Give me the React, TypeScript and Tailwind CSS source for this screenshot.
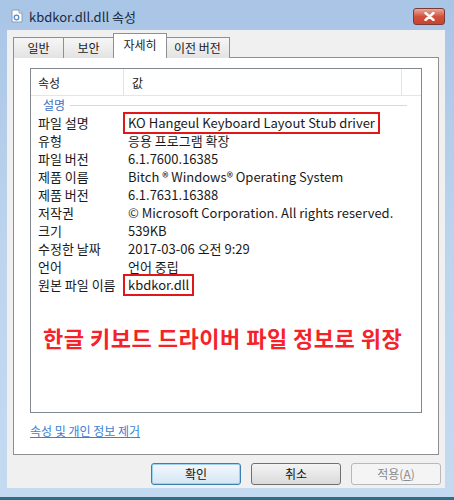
import React from "react";

const F = { fontFamily: '"Noto Sans CJK KR", "Liberation Sans", sans-serif' };

const rows: { k: string; v: string; box?: boolean; gray?: boolean }[] = [
  { k: "파일 설명", v: "KO Hangeul Keyboard Layout Stub driver", box: true },
  { k: "유형", v: "응용 프로그램 확장" },
  { k: "파일 버전", v: "6.1.7600.16385" },
  { k: "제품 이름", v: "Bitch ® Windows® Operating System" },
  { k: "제품 버전", v: "6.1.7631.16388" },
  { k: "저작권", v: "© Microsoft Corporation. All rights reserved." },
  { k: "크기", v: "539KB" },
  { k: "수정한 날짜", v: "2017-03-06 오전 9:29" },
  { k: "언어", v: "언어 중립" },
  { k: "원본 파일 이름", v: "kbdkor.dll", box: true },
];

function Btn({ children, primary, disabled }: { children: React.ReactNode; primary?: boolean; disabled?: boolean }) {
  return (
    <div
      className={
        "w-[90px] h-[22px] rounded-[3px] flex items-center justify-center text-[12px] " +
        (disabled
          ? "border border-[#b5b9bc] bg-[#f4f4f4] text-[#8a8a8a]"
          : primary
          ? "border border-[#3c7fb1] bg-gradient-to-b from-[#f3f8fc] to-[#d4e6f3] text-[#111] shadow-[inset_0_0_0_1px_#9fd2f0]"
          : "border border-[#707070] bg-gradient-to-b from-[#f4f4f4] to-[#dadada] text-[#111]")
      }
      style={F}
    >
      {children}
    </div>
  );
}

export default function App() {
  return (
    <div className="w-[454px] h-[500px] flex flex-col bg-gradient-to-b from-[#a9c5e6] via-[#bcd4ee] to-[#c4daf1] border-b-[3px] border-[#2d6f86]" style={F}>
      {/* title bar */}
      <div className="h-[30px] flex items-start justify-between shrink-0">
        <div className="flex items-center h-[30px] pl-[11px] pt-[2px]">
          <svg width="12" height="14" viewBox="0 0 12 14" className="mr-[6px]">
            <path d="M1 1h7l3 3v9H1z" fill="#fff" stroke="#8a9bb0" strokeWidth="1" />
            <path d="M8 1v3h3" fill="#e8eef5" stroke="#8a9bb0" strokeWidth="1" />
            <circle cx="5.5" cy="8.5" r="2.3" fill="none" stroke="#4a8ccc" strokeWidth="1.3" />
          </svg>
          <span className="text-[13px] text-[#1a2a44] leading-none">kbdkor.dll.dll 속성</span>
        </div>
        <div className="mt-[8px] mr-[9px] w-[32px] h-[17px] rounded-[3px] border border-[#7a3a3a] bg-gradient-to-b from-[#e9a99b] via-[#d0523d] to-[#c9442e] flex items-center justify-center">
          <svg width="11" height="9" viewBox="0 0 11 9">
            <path d="M1.5 1 L9.5 8 M9.5 1 L1.5 8" stroke="#fff" strokeWidth="2.4" strokeLinecap="round" />
          </svg>
        </div>
      </div>

      {/* client area */}
      <div className="ml-[7px] mr-[9px] mb-[9px] flex-1 bg-[#f0f0f0] flex flex-col">
        {/* tabs */}
        <div className="flex items-end pl-[6px] h-[28px] pt-[4px] relative z-10">
          <div className="h-[21px] w-[51px] border border-b-0 border-[#8e8f8f] bg-gradient-to-b from-[#f6f6f6] to-[#e3e3e3] flex items-center justify-center text-[12px] text-[#1a1a1a]">일반</div>
          <div className="h-[21px] w-[50px] border border-b-0 border-l-0 border-[#8e8f8f] bg-gradient-to-b from-[#f6f6f6] to-[#e3e3e3] flex items-center justify-center text-[12px] text-[#1a1a1a]">보안</div>
          <div className="h-[25px] w-[54px] -mx-[1px] border border-b-0 border-[#8e8f8f] bg-white flex items-center justify-center text-[12px] text-[#1a1a1a] pb-[2px] relative">자세히</div>
          <div className="h-[21px] w-[64px] border border-b-0 border-l-0 border-[#8e8f8f] bg-gradient-to-b from-[#f6f6f6] to-[#e3e3e3] flex items-center justify-center text-[12px] text-[#1a1a1a]">이전 버전</div>
        </div>

        {/* panel */}
        <div className="ml-[6px] mr-[6px] -mt-[1px] h-[398px] border border-[#8e8f8f] bg-white flex flex-col px-[16px] pt-[10px]">
          {/* list box */}
          <div className="h-[345px] border border-[#828790] bg-white flex flex-col">
            {/* header */}
            <div className="h-[27px] flex border-b border-[#e5e5e5] text-[12px] text-[#1a1a1a] shrink-0">
              <div className="w-[93px] border-r border-[#e3e3e3] pl-[7px] flex items-center pt-[2px]">속성</div>
              <div className="w-[278px] border-r border-[#e3e3e3] pl-[8px] flex items-center pt-[2px]">값</div>
              <div className="flex-1" />
            </div>
            {/* category */}
            <div className="h-[18px] flex items-center pl-[12px] pr-[14px]">
              <span className="text-[12px] text-[#3d6fc4] mr-[5px]">설명</span>
              <div className="flex-1 h-px bg-[#c9dcf1]" />
            </div>
            {rows.map((r) => (
              <div key={r.k} className="h-[18px] flex items-center text-[13px] text-[#1a1a1a]">
                <div className="w-[92px] pl-[7px] whitespace-nowrap overflow-visible">{r.k}</div>
                <div className="flex-1 pl-[5px] whitespace-nowrap relative z-10">
                  {r.box ? (
                    <span className="inline-block border-2 border-[#e01818] bg-white px-[3px] -ml-[5px] h-[22px] leading-[18px] -my-[2px]">
                      {r.v}
                    </span>
                  ) : (
                    r.v
                  )}
                </div>
              </div>
            ))}
            <div className="mt-[30px] pl-[12px] text-[22px] font-bold text-[#f5222a] tracking-[0.5px] leading-[26px] whitespace-nowrap">
              한글 키보드 드라이버 파일 정보로 위장
            </div>
          </div>
          <div className="mt-[9px] text-[12px] text-[#3b7fd8] underline">속성 및 개인 정보 제거</div>
        </div>

        {/* buttons */}
        <div className="flex justify-end gap-[10px] pr-[4px] mt-[8px]">
          <Btn primary>확인</Btn>
          <Btn>취소</Btn>
          <Btn disabled>
            <span>
              적용(<span className="underline">A</span>)
            </span>
          </Btn>
        </div>
      </div>
    </div>
  );
}
